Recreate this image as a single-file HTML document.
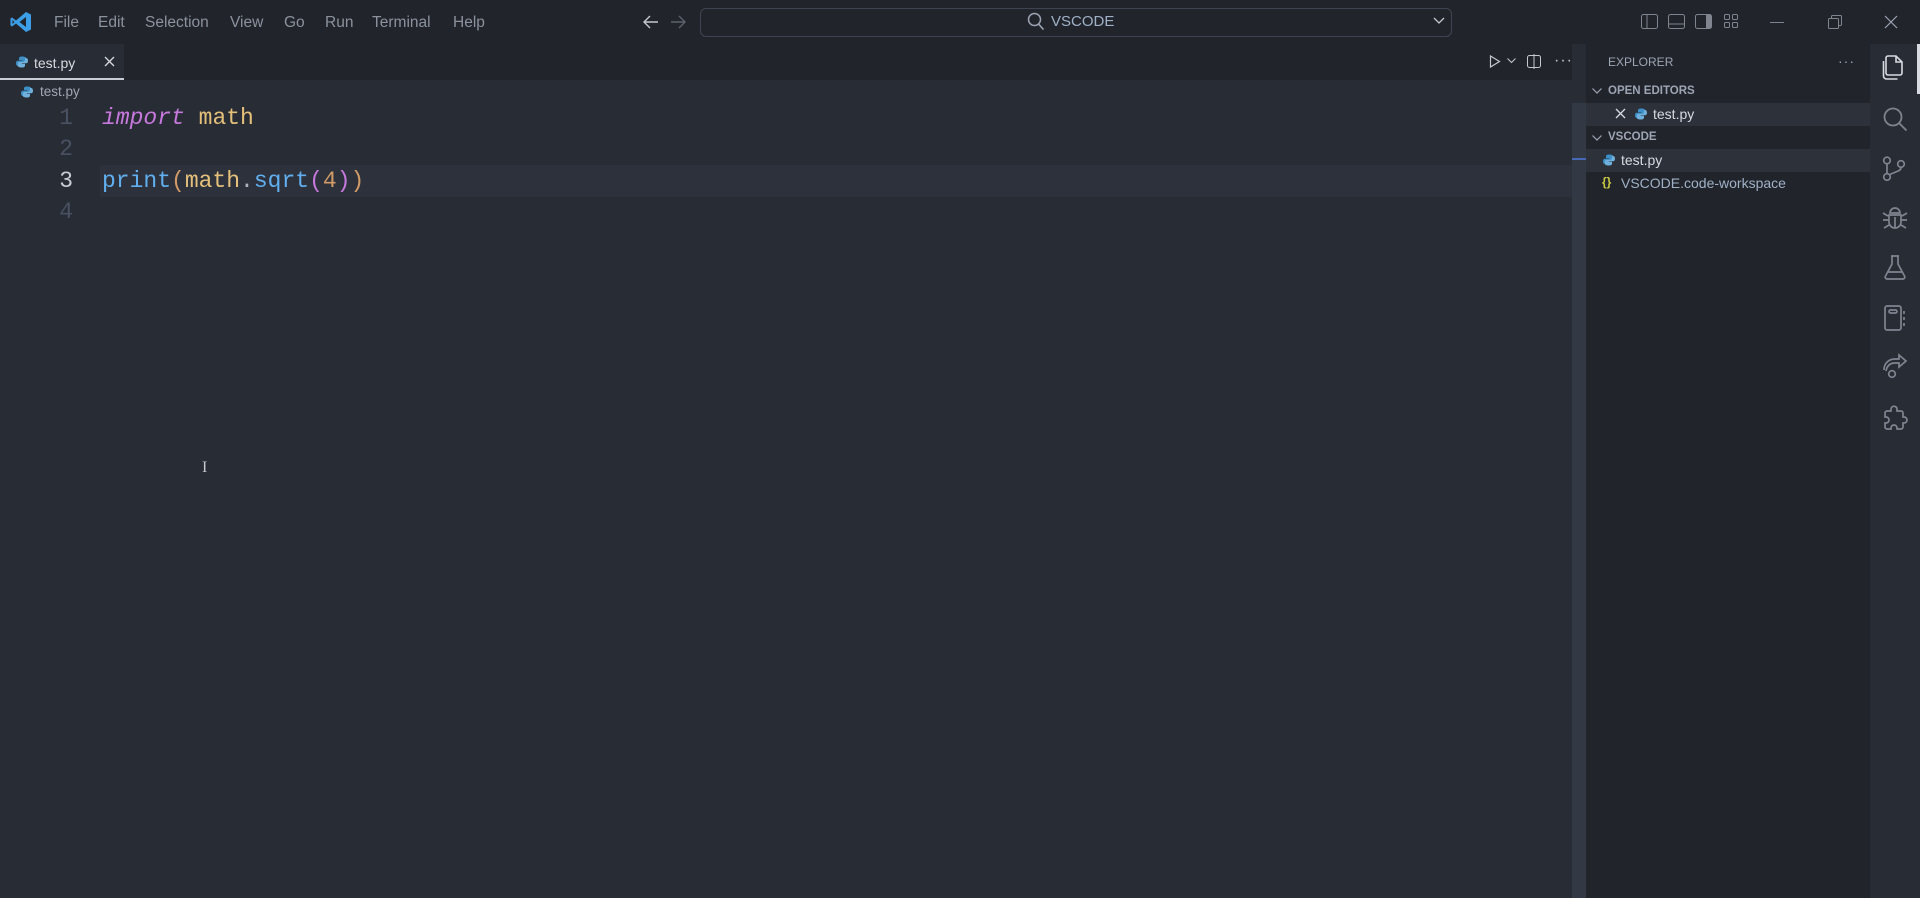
<!DOCTYPE html>
<html><head><meta charset="utf-8"><style>
*{margin:0;padding:0;box-sizing:border-box}
body{width:1920px;height:898px;overflow:hidden;background:#282c34;font-family:"Liberation Sans",sans-serif;position:relative;color:#9da5b4}
.abs{position:absolute}
#title{left:0;top:0;width:1920px;height:44px;background:#21252b}
.menu{top:14px;font-size:15.5px;color:#8b929d}
#tabs{left:0;top:44px;width:1572px;height:36px;background:#21252b}
#tab{left:0;top:44px;width:124px;height:36px;background:#282c34;border-bottom:2px solid #c8ccd4}
.code{font-family:"Liberation Mono",monospace;font-size:23px;line-height:31.5px;white-space:pre}
.ln{left:0;width:73px;text-align:right;color:#495162}
#side{left:1586px;top:44px;width:284px;height:854px;background:#21252b}
#act{left:1870px;top:44px;width:50px;height:854px;background:#282c34}
.st{font-size:14px;color:#d7dae0}
svg{position:absolute;overflow:visible}
</style></head><body>
<div id="title" class="abs"></div>
<svg style="left:9px;top:10px" width="24" height="24" viewBox="0 0 24 24"><path d="M17 2 L22 4.5 V19.5 L17 22 L7 13.5 L3 16.5 L1.5 15.5 V8.5 L3 7.5 L7 10.5 Z M17 7 L10.5 12 L17 17 Z M3.5 10 V14 L5.5 12 Z" fill="#3b9ee6" fill-rule="evenodd"/></svg>
<div class="abs menu" style="left:54px">File</div>
<div class="abs menu" style="left:98px">Edit</div>
<div class="abs menu" style="left:145px">Selection</div>
<div class="abs menu" style="left:230px">View</div>
<div class="abs menu" style="left:284px">Go</div>
<div class="abs menu" style="left:325px">Run</div>
<div class="abs menu" style="left:372px">Terminal</div>
<div class="abs menu" style="left:453px">Help</div>
<svg style="left:643px;top:15px" width="16" height="14"><path d="M15 7H2M7 1L1 7l6 6" stroke="#c5c8ce" stroke-width="1.4" fill="none"/></svg>
<svg style="left:670px;top:15px" width="16" height="14"><path d="M1 7h13M9 1l6 6-6 6" stroke="#5c626c" stroke-width="1.4" fill="none"/></svg>
<div class="abs" style="left:700px;top:8px;width:752px;height:29px;border:1px solid #3e4452;border-radius:6px;background:#21252b"></div>
<svg style="left:1027px;top:12px" width="18" height="19"><circle cx="7.5" cy="7.5" r="6" stroke="#9da5b4" stroke-width="1.5" fill="none"/><path d="M11.5 12l5 5.5" stroke="#9da5b4" stroke-width="1.6"/></svg>
<div class="abs" style="left:1051px;top:13px;font-size:15px;color:#9fb0c7">VSCODE</div>
<svg style="left:1433px;top:17px" width="12" height="8"><path d="M1 1l5 5 5-5" stroke="#c5c8ce" stroke-width="1.3" fill="none"/></svg>
<svg style="left:1641px;top:14px" width="17" height="15"><rect x=".5" y=".5" width="16" height="14" rx="2" stroke="#7f848e" fill="none"/><path d="M6 1v13" stroke="#7f848e"/></svg>
<svg style="left:1668px;top:14px" width="17" height="15"><rect x=".5" y=".5" width="16" height="14" rx="2" stroke="#7f848e" fill="none"/><path d="M1 10h15" stroke="#7f848e"/></svg>
<svg style="left:1695px;top:14px" width="17" height="15"><rect x=".5" y=".5" width="16" height="14" rx="2" stroke="#7f848e" fill="none"/><rect x="11" y="1" width="5" height="13" fill="#7f848e"/></svg>
<svg style="left:1724px;top:14px" width="15" height="15" fill="none" stroke="#7f848e"><rect x=".5" y=".5" width="5" height="5" rx="1"/><rect x="8.5" y=".5" width="5" height="5" rx="1"/><rect x=".5" y="8.5" width="5" height="5" rx="1"/><rect x="8.5" y="8.5" width="5" height="5" rx="1"/></svg>
<svg style="left:1770px;top:22px" width="14" height="2"><path d="M0 .5h14" stroke="#7f848e"/></svg>
<svg style="left:1828px;top:15px" width="14" height="14" fill="none" stroke="#7f848e"><rect x=".5" y="3.5" width="10" height="10" rx="1"/><path d="M3.5 3.5v-2a1 1 0 0 1 1-1h8a1 1 0 0 1 1 1v8a1 1 0 0 1-1 1h-2"/></svg>
<svg style="left:1884px;top:15px" width="14" height="14"><path d="M1 1l12 12M13 1L1 13" stroke="#9da5b4" stroke-width="1.2"/></svg>

<div id="tabs" class="abs"></div>
<div id="tab" class="abs"></div>
<svg style="left:16px;top:56px" width="12" height="12" viewBox="0 0 12 12"><path d="M6 .5c-3 0-3 1.2-3 2.5v1.3h3.2v.5H1.8C.5 4.8 0 6 0 7.3s.6 2.7 1.8 2.7H3V8.3c0-1.2 1-2.2 2.2-2.2h3.2c1 0 1.8-.8 1.8-1.8V2.5C10.2 1.3 9 .5 6 .5z" fill="#3d8fc6"/><path d="M6 11.5c3 0 3-1.2 3-2.5V7.7H5.8v-.5h4.4C11.5 7.2 12 6 12 4.7S11.4 2 10.2 2H9v1.7c0 1.2-1 2.2-2.2 2.2H3.6c-1 0-1.8.8-1.8 1.8v1.8C1.8 10.7 3 11.5 6 11.5z" fill="#6fb0dc"/></svg>
<div class="abs st" style="left:34px;top:55px">test.py</div>
<svg style="left:104px;top:56px" width="11" height="11"><path d="M1 1l9 9M10 1L1 10" stroke="#d7dae0" stroke-width="1.3"/></svg>
<svg style="left:1489px;top:55px" width="12" height="13"><path d="M1.5 1l9 5.5-9 5.5z" stroke="#c5c8ce" fill="none" stroke-width="1.2"/></svg>
<svg style="left:1507px;top:58px" width="9" height="6"><path d="M.5.5l4 4 4-4" stroke="#c5c8ce" fill="none"/></svg>
<svg style="left:1527px;top:54px" width="15" height="15" fill="none" stroke="#c5c8ce"><rect x=".5" y="1.5" width="13" height="12" rx="2"/><path d="M7 0v15" stroke="#c5c8ce"/></svg>
<div class="abs" style="left:1554px;top:52px;font-size:16px;color:#c5c8ce;letter-spacing:1px">···</div>

<svg style="left:21px;top:86px" width="12" height="12" viewBox="0 0 12 12"><path d="M6 .5c-3 0-3 1.2-3 2.5v1.3h3.2v.5H1.8C.5 4.8 0 6 0 7.3s.6 2.7 1.8 2.7H3V8.3c0-1.2 1-2.2 2.2-2.2h3.2c1 0 1.8-.8 1.8-1.8V2.5C10.2 1.3 9 .5 6 .5z" fill="#3d8fc6"/><path d="M6 11.5c3 0 3-1.2 3-2.5V7.7H5.8v-.5h4.4C11.5 7.2 12 6 12 4.7S11.4 2 10.2 2H9v1.7c0 1.2-1 2.2-2.2 2.2H3.6c-1 0-1.8.8-1.8 1.8v1.8C1.8 10.7 3 11.5 6 11.5z" fill="#6fb0dc"/></svg>
<div class="abs" style="left:40px;top:84px;font-size:13.5px;color:#a0a7b3">test.py</div>

<div class="abs" style="left:100px;top:165px;width:1472px;height:32px;background:#2c313c"></div>
<div class="abs code ln" style="top:103px">1</div>
<div class="abs code ln" style="top:134px">2</div>
<div class="abs code ln" style="top:166px;color:#c8ccd4">3</div>
<div class="abs code ln" style="top:197px">4</div>
<div class="abs code" style="left:102px;top:103px"><i style="color:#c678dd">import</i> <span style="color:#e5c07b">math</span></div>
<div class="abs code" style="left:102px;top:166px"><span style="color:#61afef">print</span><span style="color:#d19a66">(</span><span style="color:#e5c07b">math</span><span style="color:#abb2bf">.</span><span style="color:#61afef">sqrt</span><span style="color:#c678dd">(</span><span style="color:#d19a66">4</span><span style="color:#c678dd">)</span><span style="color:#d19a66">)</span></div>
<div class="abs" style="left:202px;top:459px;font-size:16px;color:#c5c8ce;font-family:'Liberation Serif',serif">I</div>

<div class="abs" style="left:1572px;top:103px;width:14px;height:795px;background:#323844"></div>
<div class="abs" style="left:1572px;top:158px;width:14px;height:2px;background:#528bff;opacity:.6"></div>

<div id="side" class="abs"></div>
<div class="abs" style="left:1586px;top:103px;width:284px;height:23px;background:#2c313a"></div>
<div class="abs" style="left:1586px;top:149px;width:284px;height:23px;background:#2c313a"></div>
<div class="abs" style="left:1608px;top:55px;font-size:12px;color:#9da5b4">EXPLORER</div>
<div class="abs" style="left:1838px;top:53px;font-size:14px;color:#9da5b4;letter-spacing:1px">···</div>
<svg style="left:1592px;top:88px" width="10" height="7"><path d="M.5.5l4.5 4.5 4.5-4.5" stroke="#9da5b4" fill="none" stroke-width="1.2"/></svg>
<div class="abs" style="left:1608px;top:85px;font-size:11.5px;font-weight:bold;color:#9da5b4">OPEN EDITORS</div>
<svg style="left:1615px;top:108px" width="11" height="11"><path d="M1 1l9 9M10 1L1 10" stroke="#d7dae0" stroke-width="1.3"/></svg>
<svg style="left:1635px;top:108px" width="12" height="12" viewBox="0 0 12 12"><path d="M6 .5c-3 0-3 1.2-3 2.5v1.3h3.2v.5H1.8C.5 4.8 0 6 0 7.3s.6 2.7 1.8 2.7H3V8.3c0-1.2 1-2.2 2.2-2.2h3.2c1 0 1.8-.8 1.8-1.8V2.5C10.2 1.3 9 .5 6 .5z" fill="#3d8fc6"/><path d="M6 11.5c3 0 3-1.2 3-2.5V7.7H5.8v-.5h4.4C11.5 7.2 12 6 12 4.7S11.4 2 10.2 2H9v1.7c0 1.2-1 2.2-2.2 2.2H3.6c-1 0-1.8.8-1.8 1.8v1.8C1.8 10.7 3 11.5 6 11.5z" fill="#6fb0dc"/></svg>
<div class="abs st" style="left:1653px;top:106px">test.py</div>
<svg style="left:1592px;top:135px" width="10" height="7"><path d="M.5.5l4.5 4.5 4.5-4.5" stroke="#9da5b4" fill="none" stroke-width="1.2"/></svg>
<div class="abs" style="left:1608px;top:131px;font-size:11.5px;font-weight:bold;color:#9da5b4">VSCODE</div>
<svg style="left:1603px;top:154px" width="12" height="12" viewBox="0 0 12 12"><path d="M6 .5c-3 0-3 1.2-3 2.5v1.3h3.2v.5H1.8C.5 4.8 0 6 0 7.3s.6 2.7 1.8 2.7H3V8.3c0-1.2 1-2.2 2.2-2.2h3.2c1 0 1.8-.8 1.8-1.8V2.5C10.2 1.3 9 .5 6 .5z" fill="#3d8fc6"/><path d="M6 11.5c3 0 3-1.2 3-2.5V7.7H5.8v-.5h4.4C11.5 7.2 12 6 12 4.7S11.4 2 10.2 2H9v1.7c0 1.2-1 2.2-2.2 2.2H3.6c-1 0-1.8.8-1.8 1.8v1.8C1.8 10.7 3 11.5 6 11.5z" fill="#6fb0dc"/></svg>
<div class="abs st" style="left:1621px;top:152px">test.py</div>
<div class="abs" style="left:1602px;top:175px;font-size:12px;font-weight:bold;color:#cbcb41">{}</div>
<div class="abs" style="left:1621px;top:175px;font-size:14px;color:#9fb0c7">VSCODE.code-workspace</div>

<div id="act" class="abs"></div>
<div class="abs" style="left:1917px;top:44px;width:3px;height:50px;background:#d7dae0"></div>
<svg style="left:1882px;top:55px" width="24" height="26" fill="none" stroke="#d7dae0" stroke-width="1.6"><path d="M6 1h8l6 6v11a2 2 0 0 1-2 2H6a2 2 0 0 1-2-2V3a2 2 0 0 1 2-2zM14 1v6h6"/><path d="M1.5 6v15a3 3 0 0 0 3 3h11"/></svg>
<svg style="left:1882px;top:106px" width="26" height="26" fill="none" stroke="#7f848e" stroke-width="1.8"><circle cx="11" cy="11" r="8.5"/><path d="M17 17l7.5 7.5"/></svg>
<svg style="left:1882px;top:156px" width="24" height="26" fill="none" stroke="#7f848e" stroke-width="1.7"><circle cx="5" cy="4.5" r="3.3"/><circle cx="19" cy="8" r="3.3"/><circle cx="5" cy="21" r="3.3"/><path d="M5 8v9.5M19 11.5c0 4-6 4-12 7.5"/></svg>
<svg style="left:1882px;top:206px" width="26" height="25" fill="none" stroke="#7f848e" stroke-width="1.7"><path d="M8 7a5 5 0 0 1 10 0zM7 9h12v7a6 6 0 0 1-12 0zM13 11v11M1 7l5 3M25 7l-5 3M1 14h6M25 14h-6M2 22l5-3M24 22l-5-3"/></svg>
<svg style="left:1884px;top:255px" width="22" height="26" fill="none" stroke="#7f848e" stroke-width="1.7"><path d="M7 1h8M8 1v8L1.5 21a2 2 0 0 0 2 3h15a2 2 0 0 0 2-3L14 9V1M4 17h14"/></svg>
<svg style="left:1884px;top:305px" width="22" height="26" fill="none" stroke="#7f848e" stroke-width="1.7"><rect x="1" y="1" width="16" height="24" rx="2"/><rect x="5" y="5" width="8" height="3" rx="1.5"/><path d="M20 6v3M20 12v3M20 18v3"/></svg>
<svg style="left:1882px;top:355px" width="26" height="24" fill="none" stroke="#7f848e" stroke-width="1.7"><path d="M2 15c0-7 5-11 11-11h4V0l7 6-7 6V8h-4c-5 0-8 3-9 8"/><circle cx="10" cy="19" r="3.3"/></svg>
<svg style="left:1882px;top:405px" width="26" height="26" fill="none" stroke="#7f848e" stroke-width="1.7"><path d="M10 2a3 3 0 0 1 5 2v2h4a2 2 0 0 1 2 2v4h1a3 3 0 0 1 0 6h-1v4a2 2 0 0 1-2 2h-4v-1a3 3 0 0 0-6 0v1H5a2 2 0 0 1-2-2v-4h1a3 3 0 0 0 0-6H3V8a2 2 0 0 1 2-2h4V4a3 3 0 0 1 1-2z"/></svg>
</body></html>
